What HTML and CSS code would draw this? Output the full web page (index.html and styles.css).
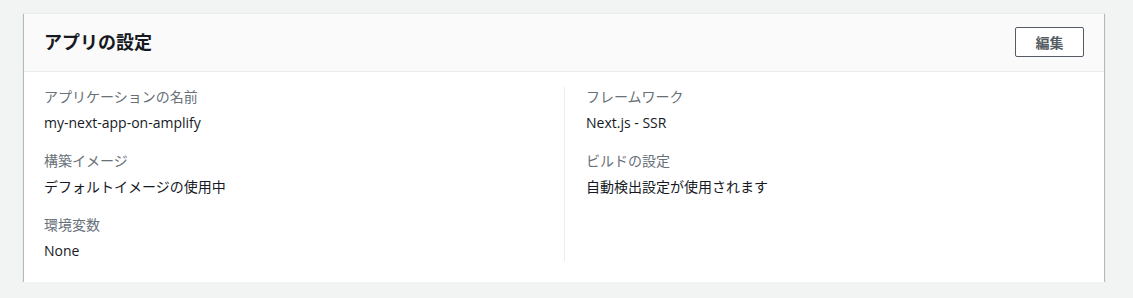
FILE: index.html
```html
<!DOCTYPE html>
<html lang="ja">
  <head>
    <meta charset="UTF-8">
    <meta name="viewport" content="width=device-width, initial-scale=1.0">
    <title>アプリの設定</title>
    <link rel="stylesheet" href="styles.css">
  </head>
  <body>
    <main class="page">
      <section class="card">
        <div class="card-header">
          <h2>アプリの設定</h2>
          <button class="btn">編集</button>
        </div>

        <div class="card-body">
          <div class="column">
            <div class="kv">
              <div class="kv-label">アプリケーションの名前</div>
              <div class="kv-value">my-next-app-on-amplify</div>
            </div>
            <div class="kv">
              <div class="kv-label">構築イメージ</div>
              <div class="kv-value">デフォルトイメージの使用中</div>
            </div>
            <div class="kv">
              <div class="kv-label">環境変数</div>
              <div class="kv-value">None</div>
            </div>
          </div>

          <div class="column divided">
            <div class="kv">
              <div class="kv-label">フレームワーク</div>
              <div class="kv-value">Next.js - SSR</div>
            </div>
            <div class="kv">
              <div class="kv-label">ビルドの設定</div>
              <div class="kv-value">自動検出設定が使用されます</div>
            </div>
          </div>
        </div>
      </section>
    </main>
  </body>
</html>
```

FILE: styles.css
```css
body {
  background-color: #f2f3f3;
  font-family: "Open Sans", "Noto Sans CJK JP", sans-serif;
  color: #16191f;
  margin: 0;
  padding: 0;
}

.page {
  padding: 13px 29px 0 24px;
}

.card {
  background-color: #ffffff;
  border-top: 1px solid #eaeded;
  box-shadow: 0 1px 1px 0 rgba(0, 28, 36, 0.45),
    1px 1px 1px 0 rgba(0, 28, 36, 0.2),
    -1px 1px 1px 0 rgba(0, 28, 36, 0.2);
}

.card-header {
  display: flex;
  justify-content: space-between;
  align-items: center;
  background-color: #fafafa;
  border-bottom: 1px solid #eaeded;
  padding: 13px 20px 14px 20px;
}

.card-header h2 {
  margin: 0;
  font-size: 18px;
  font-weight: bold;
  line-height: 30px;
}

.btn {
  font-family: inherit;
  font-size: 14px;
  font-weight: bold;
  color: #545b64;
  background-color: #ffffff;
  border: 1px solid #545b64;
  border-radius: 2px;
  width: 69px;
  height: 30px;
  padding: 0;
  cursor: pointer;
}

.card-body {
  display: grid;
  grid-template-columns: 1fr 1fr;
  padding: 15px 20px 21px 20px;
}

.column {
  padding-right: 20px;
}

.divided {
  border-left: 1px solid #eaeded;
  padding-left: 21px;
}

.kv {
  margin-bottom: 18px;
}

.kv:last-child {
  margin-bottom: 0;
}

.kv-label {
  font-size: 14px;
  line-height: 20px;
  color: #687078;
  margin-bottom: 6px;
}

.kv-value {
  font-size: 14px;
  line-height: 20px;
}
```
